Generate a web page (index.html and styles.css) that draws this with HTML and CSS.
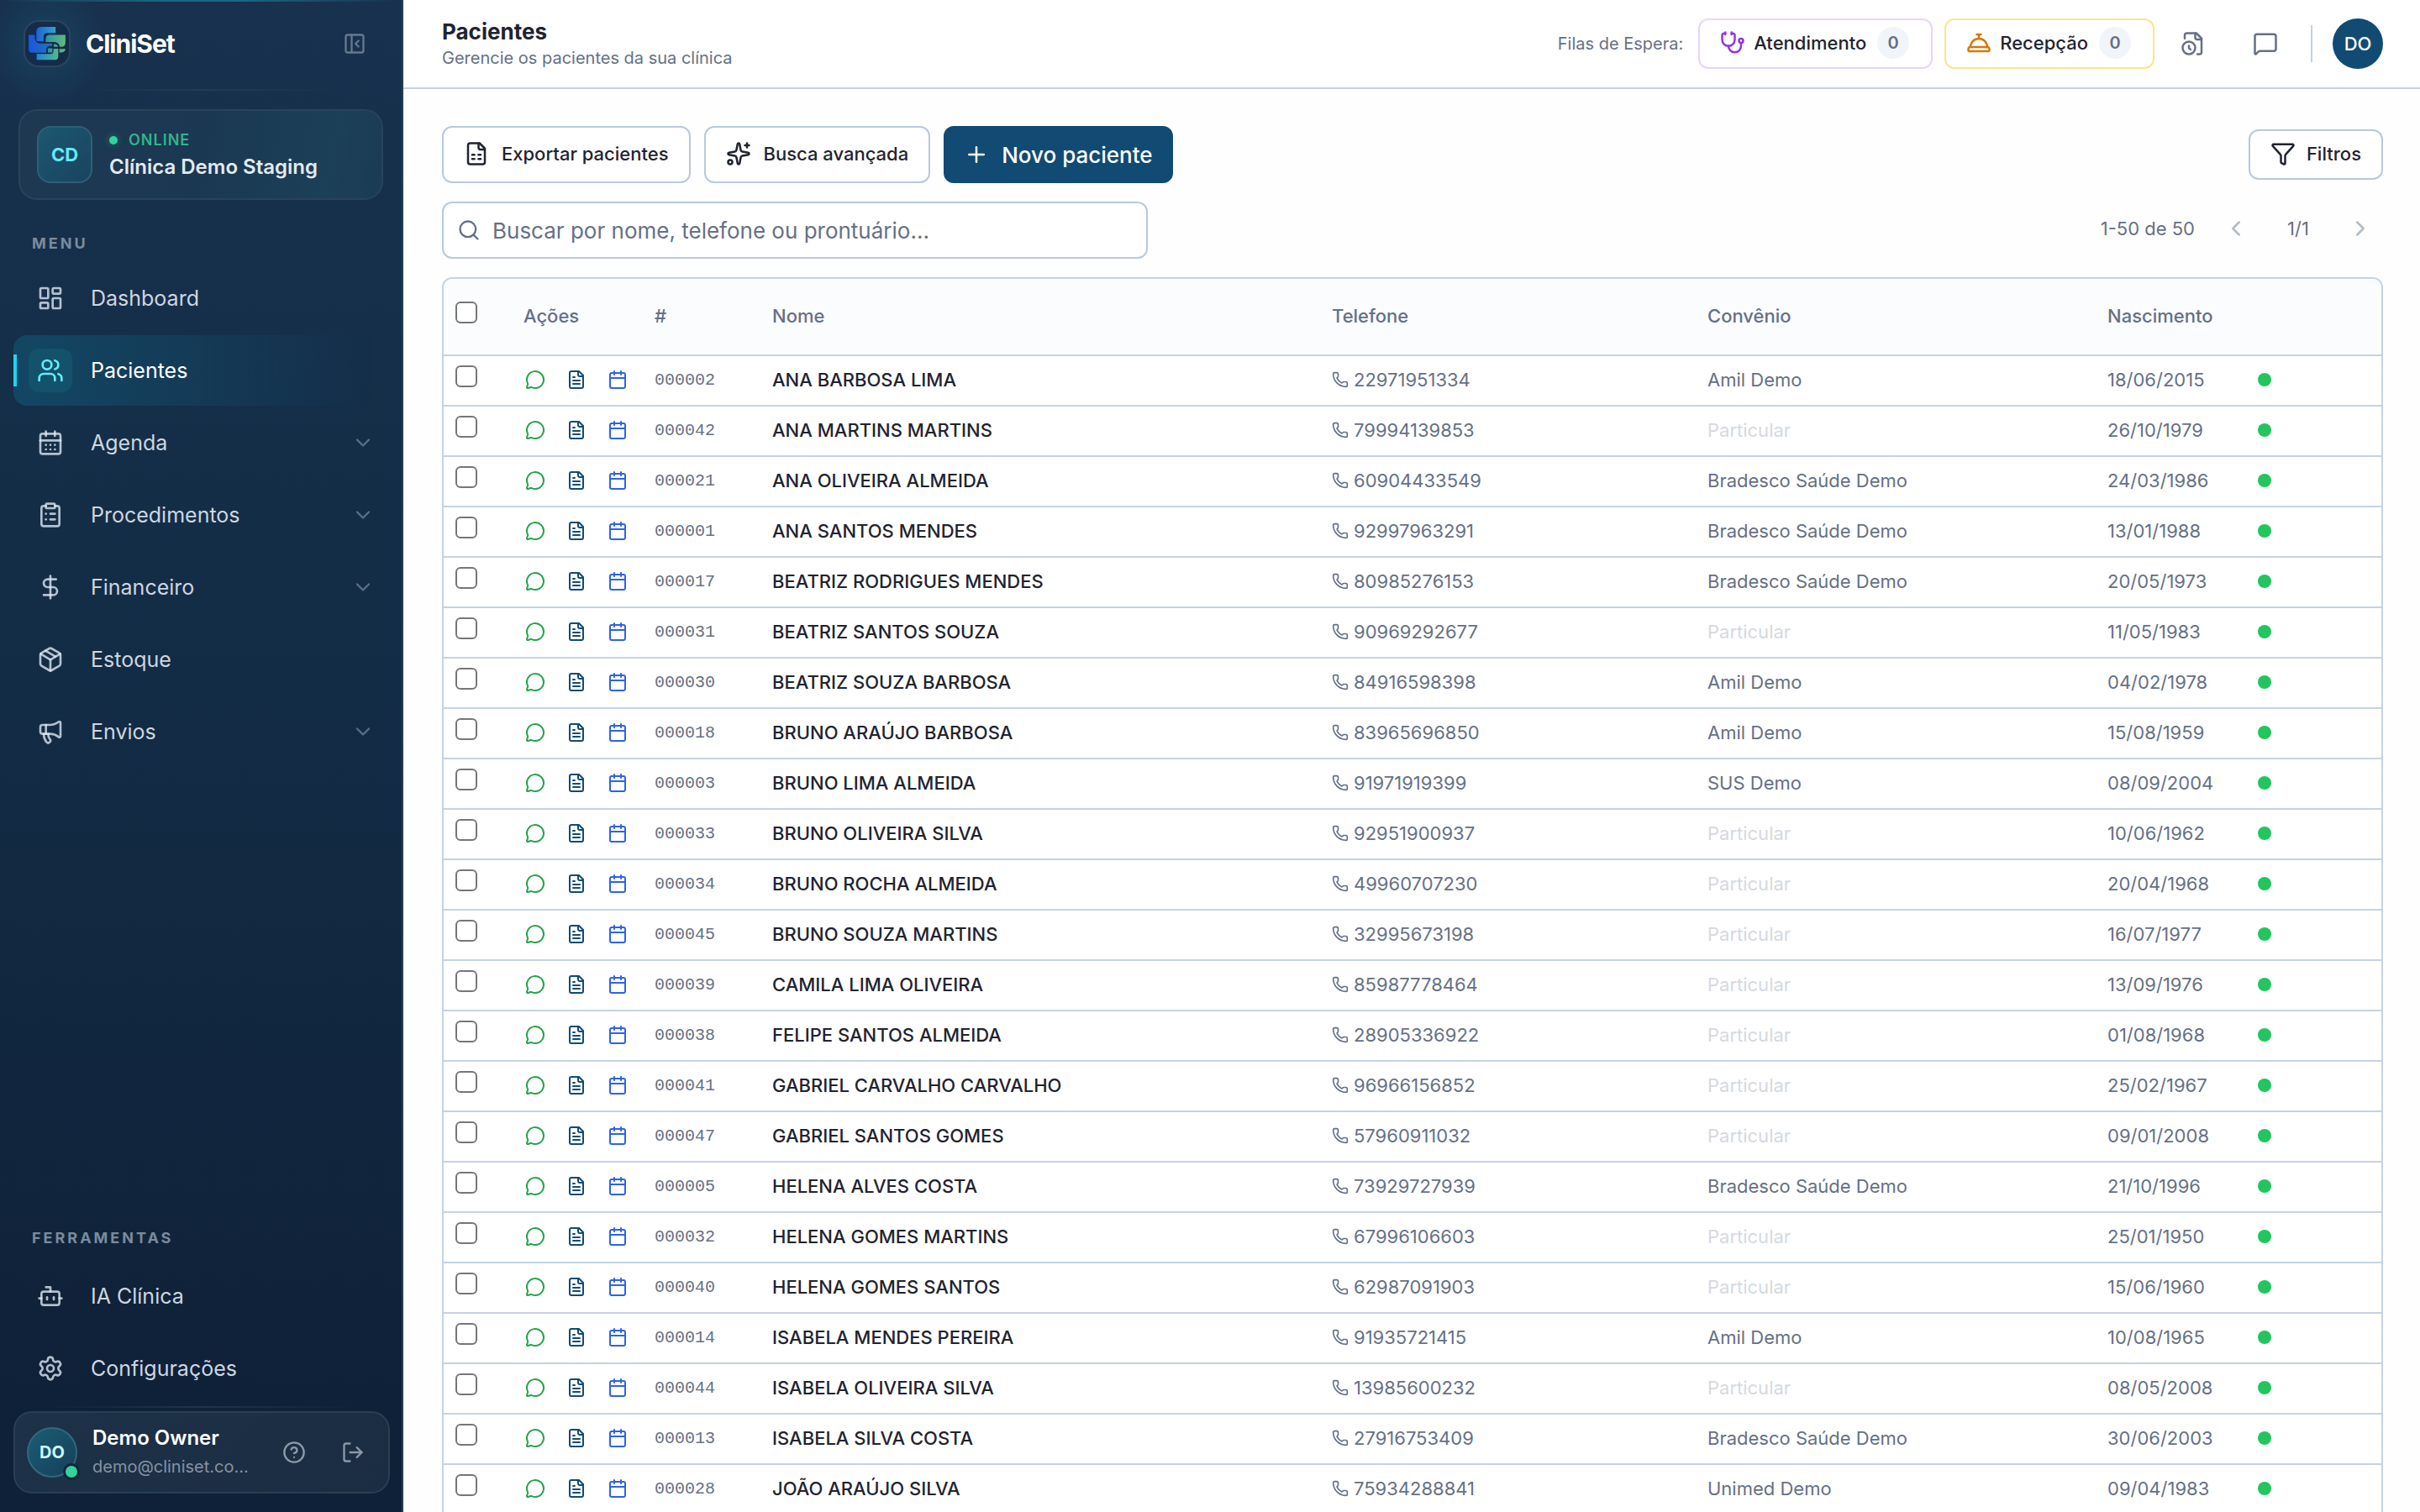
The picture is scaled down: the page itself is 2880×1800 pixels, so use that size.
FILE: index.html
```html
<!DOCTYPE html>
<html lang="pt-BR">
<head>
<meta charset="utf-8">
<title>Pacientes - CliniSet</title>
<link rel="stylesheet" href="styles.css">
</head>
<body>
<svg class="sprite" aria-hidden="true">
  <symbol id="i-dashboard" viewBox="0 0 24 24"><rect x="3" y="3" width="7" height="9" rx="1"/><rect x="14" y="3" width="7" height="5" rx="1"/><rect x="14" y="12" width="7" height="9" rx="1"/><rect x="3" y="16" width="7" height="5" rx="1"/></symbol>
  <symbol id="i-users" viewBox="0 0 24 24"><path d="M16 21v-2a4 4 0 0 0-4-4H6a4 4 0 0 0-4 4v2"/><circle cx="9" cy="7" r="4"/><path d="M22 21v-2a4 4 0 0 0-3-3.87"/><path d="M16 3.13a4 4 0 0 1 0 7.75"/></symbol>
  <symbol id="i-calendar-days" viewBox="0 0 24 24"><path d="M8 2v4"/><path d="M16 2v4"/><rect x="3" y="4" width="18" height="18" rx="2"/><path d="M3 10h18"/><path d="M8 14h.01"/><path d="M12 14h.01"/><path d="M16 14h.01"/><path d="M8 18h.01"/><path d="M12 18h.01"/><path d="M16 18h.01"/></symbol>
  <symbol id="i-clipboard" viewBox="0 0 24 24"><rect x="8" y="2" width="8" height="4" rx="1"/><path d="M16 4h2a2 2 0 0 1 2 2v14a2 2 0 0 1-2 2H6a2 2 0 0 1-2-2V6a2 2 0 0 1 2-2h2"/><path d="M12 11h4"/><path d="M12 16h4"/><path d="M8 11h.01"/><path d="M8 16h.01"/></symbol>
  <symbol id="i-dollar" viewBox="0 0 24 24"><path d="M12 2v20"/><path d="M17 5H9.5a3.5 3.5 0 0 0 0 7h5a3.5 3.5 0 0 1 0 7H6"/></symbol>
  <symbol id="i-package" viewBox="0 0 24 24"><path d="M11 21.73a2 2 0 0 0 2 0l7-4A2 2 0 0 0 21 16V8a2 2 0 0 0-1-1.73l-7-4a2 2 0 0 0-2 0l-7 4A2 2 0 0 0 3 8v8a2 2 0 0 0 1 1.73z"/><path d="M12 22V12"/><path d="m3.3 7 7.703 4.734a2 2 0 0 0 1.994 0L20.7 7"/><path d="m7.5 4.27 9 5.15"/></symbol>
  <symbol id="i-megaphone" viewBox="0 0 24 24"><path d="M11 6a13 13 0 0 0 8.4-2.8A1 1 0 0 1 21 4v12a1 1 0 0 1-1.6.8A13 13 0 0 0 11 14H5a2 2 0 0 1-2-2V8a2 2 0 0 1 2-2z"/><path d="M6 14a12 12 0 0 0 2.4 7.2 2 2 0 0 0 3.2-2.4A8 8 0 0 1 10 14"/><path d="M8 6v8"/></symbol>
  <symbol id="i-bot" viewBox="0 0 24 24"><path d="M12 8V4H8"/><rect x="4" y="8" width="16" height="12" rx="2"/><path d="M2 14h2"/><path d="M20 14h2"/><path d="M15 13v2"/><path d="M9 13v2"/></symbol>
  <symbol id="i-settings" viewBox="0 0 24 24"><path d="M9.671 4.136a2.34 2.34 0 0 1 4.659 0 2.34 2.34 0 0 0 3.319 1.915 2.34 2.34 0 0 1 2.33 4.033 2.34 2.34 0 0 0 0 3.831 2.34 2.34 0 0 1-2.33 4.033 2.34 2.34 0 0 0-3.319 1.915 2.34 2.34 0 0 1-4.659 0 2.34 2.34 0 0 0-3.32-1.915 2.34 2.34 0 0 1-2.33-4.033 2.34 2.34 0 0 0 0-3.831A2.34 2.34 0 0 1 6.35 6.051a2.34 2.34 0 0 0 3.319-1.915"/><circle cx="12" cy="12" r="3"/></symbol>
  <symbol id="i-help" viewBox="0 0 24 24"><circle cx="12" cy="12" r="10"/><path d="M9.09 9a3 3 0 0 1 5.83 1c0 2-3 3-3 3"/><path d="M12 17h.01"/></symbol>
  <symbol id="i-logout" viewBox="0 0 24 24"><path d="M9 21H5a2 2 0 0 1-2-2V5a2 2 0 0 1 2-2h4"/><path d="m16 17 5-5-5-5"/><path d="M21 12H9"/></symbol>
  <symbol id="i-panel" viewBox="0 0 24 24"><rect x="3" y="3" width="18" height="18" rx="2"/><path d="M9 3v18"/><path d="m16 15-3-3 3-3"/></symbol>
  <symbol id="i-down" viewBox="0 0 24 24"><path d="m6 9 6 6 6-6"/></symbol>
  <symbol id="i-left" viewBox="0 0 24 24"><path d="m15 18-6-6 6-6"/></symbol>
  <symbol id="i-right" viewBox="0 0 24 24"><path d="m9 18 6-6-6-6"/></symbol>
  <symbol id="i-stethoscope" viewBox="0 0 24 24"><path d="M11 2v2"/><path d="M5 2v2"/><path d="M5 3H4a2 2 0 0 0-2 2v4a6 6 0 0 0 12 0V5a2 2 0 0 0-2-2h-1"/><path d="M8 15a6 6 0 0 0 12 0v-3"/><circle cx="20" cy="10" r="2"/></symbol>
  <symbol id="i-bell" viewBox="0 0 24 24"><path d="M3 20a1 1 0 0 1-1-1v-1a2 2 0 0 1 2-2h16a2 2 0 0 1 2 2v1a1 1 0 0 1-1 1Z"/><path d="M20 16a8 8 0 1 0-16 0"/><path d="M12 4v4"/><path d="M10 4h4"/></symbol>
  <symbol id="i-file-clock" viewBox="0 0 24 24"><path d="M16 22h2a2 2 0 0 0 2-2V7l-5-5H6a2 2 0 0 0-2 2v3"/><path d="M14 2v4a2 2 0 0 0 2 2h4"/><circle cx="8" cy="16" r="6"/><path d="M9.5 17.5 8 16.25V14"/></symbol>
  <symbol id="i-message" viewBox="0 0 24 24"><path d="M22 17a2 2 0 0 1-2 2H6.828a2 2 0 0 0-1.414.586l-2.202 2.202A.71.71 0 0 1 2 21.286V5a2 2 0 0 1 2-2h16a2 2 0 0 1 2 2z"/></symbol>
  <symbol id="i-sheet" viewBox="0 0 24 24"><path d="M15 2H6a2 2 0 0 0-2 2v16a2 2 0 0 0 2 2h12a2 2 0 0 0 2-2V7Z"/><path d="M14 2v4a2 2 0 0 0 2 2h4"/><path d="M8 13h2"/><path d="M14 13h2"/><path d="M8 17h2"/><path d="M14 17h2"/></symbol>
  <symbol id="i-sparkles" viewBox="0 0 24 24"><path d="M11.017 2.814a1 1 0 0 1 1.966 0l1.051 5.558a2 2 0 0 0 1.594 1.594l5.558 1.051a1 1 0 0 1 0 1.966l-5.558 1.051a2 2 0 0 0-1.594 1.594l-1.051 5.558a1 1 0 0 1-1.966 0l-1.051-5.558a2 2 0 0 0-1.594-1.594l-5.558-1.051a1 1 0 0 1 0-1.966l5.558-1.051a2 2 0 0 0 1.594-1.594z"/><path d="M20 2v4"/><path d="M22 4h-4"/><circle cx="4" cy="20" r="2"/></symbol>
  <symbol id="i-plus" viewBox="0 0 24 24"><path d="M5 12h14"/><path d="M12 5v14"/></symbol>
  <symbol id="i-search" viewBox="0 0 24 24"><circle cx="11" cy="11" r="8"/><path d="m21 21-4.34-4.34"/></symbol>
  <symbol id="i-funnel" viewBox="0 0 24 24"><path d="M10 20a1 1 0 0 0 .553.895l2 1A1 1 0 0 0 14 21v-7a2 2 0 0 1 .517-1.341L21.74 4.67A1 1 0 0 0 21 3H3a1 1 0 0 0-.742 1.67l7.225 7.989A2 2 0 0 1 10 14z"/></symbol>
  <symbol id="i-chat" viewBox="0 0 24 24"><path d="M2.992 16.342a2 2 0 0 1 .094 1.167l-1.065 3.29a1 1 0 0 0 1.236 1.168l3.413-.998a2 2 0 0 1 1.099.092 10 10 0 1 0-4.777-4.719"/></symbol>
  <symbol id="i-file" viewBox="0 0 24 24"><path d="M15 2H6a2 2 0 0 0-2 2v16a2 2 0 0 0 2 2h12a2 2 0 0 0 2-2V7Z"/><path d="M14 2v4a2 2 0 0 0 2 2h4"/><path d="M10 9H8"/><path d="M16 13H8"/><path d="M16 17H8"/></symbol>
  <symbol id="i-calendar" viewBox="0 0 24 24"><path d="M8 2v4"/><path d="M16 2v4"/><rect x="3" y="4" width="18" height="18" rx="2"/><path d="M3 10h18"/></symbol>
  <symbol id="i-phone" viewBox="0 0 24 24"><path d="M13.832 16.568a1 1 0 0 0 1.213-.303l.355-.465A2 2 0 0 1 17 15h3a2 2 0 0 1 2 2v3a2 2 0 0 1-2 2A18 18 0 0 1 2 4a2 2 0 0 1 2-2h3a2 2 0 0 1 2 2v3a2 2 0 0 1-.8 1.6l-.468.351a1 1 0 0 0-.292 1.233 14 14 0 0 0 6.392 6.384"/></symbol>
</svg>

<div class="app">
  <aside class="sidebar">
    <div class="brand">
      <svg class="logo" viewBox="86 74 164 164" aria-hidden="true">
        <defs>
          <linearGradient id="g-top" x1="0" x2="1"><stop offset="0" stop-color="#1b63dd"/><stop offset="1" stop-color="#2fa6c4"/></linearGradient>
          <linearGradient id="g-left" x1="0" x2="1"><stop offset="0" stop-color="#1b55dc"/><stop offset="1" stop-color="#2672b8"/></linearGradient>
          <linearGradient id="g-right" x1="0" x2="1"><stop offset="0" stop-color="#2f93a6"/><stop offset="1" stop-color="#5fba7a"/></linearGradient>
          <linearGradient id="g-bottom" x1="0" x2="1"><stop offset="0" stop-color="#1f86d6"/><stop offset="1" stop-color="#55b78c"/></linearGradient>
        </defs>
        <path fill="url(#g-top)" d="M128 145V112Q128 93 147 93H200V116H168Q155 117 155 130V147H138Q129 147 128 145Z"/>
        <path fill="url(#g-left)" d="M99 123H122V138Q124 153 140 155H187V165H178Q166 167 165 178V190H112Q99 190 99 177Z"/>
        <path fill="url(#g-right)" d="M237 123V152Q237 167 222 168H216Q213 152 196 150H163V138Q163 123 178 123Z"/>
        <path fill="url(#g-right)" d="M193 157Q207 158 209 168H193ZM171 173H188V189H171ZM214 176H237Q236 189 222 189H214Z"/>
        <path fill="url(#g-bottom)" d="M129 195H180Q190 195 192 186V175H210V203Q210 217 196 217H129Z"/>
      </svg>
      <span class="brand-name">CliniSet</span>
      <button class="collapse" type="button" aria-label="Recolher menu"><svg class="icon s28"><use href="#i-panel"/></svg></button>
    </div>

    <div class="clinic">
      <span class="clinic-badge">CD</span>
      <div class="clinic-text">
        <span class="clinic-status">ONLINE</span>
        <span class="clinic-name">Clínica Demo Staging</span>
      </div>
    </div>

    <h2 class="nav-title">MENU</h2>
    <nav class="nav">
      <a class="nav-item" href="#"><span class="nav-icon"><svg class="icon s32"><use href="#i-dashboard"/></svg></span><span>Dashboard</span></a>
      <a class="nav-item active" href="#" aria-current="page"><span class="nav-icon"><svg class="icon s32"><use href="#i-users"/></svg></span><span>Pacientes</span></a>
      <a class="nav-item" href="#"><span class="nav-icon"><svg class="icon s32"><use href="#i-calendar-days"/></svg></span><span>Agenda</span><svg class="icon s28 chev"><use href="#i-down"/></svg></a>
      <a class="nav-item" href="#"><span class="nav-icon"><svg class="icon s32"><use href="#i-clipboard"/></svg></span><span>Procedimentos</span><svg class="icon s28 chev"><use href="#i-down"/></svg></a>
      <a class="nav-item" href="#"><span class="nav-icon"><svg class="icon s32"><use href="#i-dollar"/></svg></span><span>Financeiro</span><svg class="icon s28 chev"><use href="#i-down"/></svg></a>
      <a class="nav-item" href="#"><span class="nav-icon"><svg class="icon s32"><use href="#i-package"/></svg></span><span>Estoque</span></a>
      <a class="nav-item" href="#"><span class="nav-icon"><svg class="icon s32"><use href="#i-megaphone"/></svg></span><span>Envios</span><svg class="icon s28 chev"><use href="#i-down"/></svg></a>
    </nav>

    <h2 class="nav-title tools">FERRAMENTAS</h2>
    <nav class="nav">
      <a class="nav-item" href="#"><span class="nav-icon"><svg class="icon s32"><use href="#i-bot"/></svg></span><span>IA Clínica</span></a>
      <a class="nav-item" href="#"><span class="nav-icon"><svg class="icon s32"><use href="#i-settings"/></svg></span><span>Configurações</span></a>
    </nav>

    <div class="user">
      <span class="user-avatar">DO</span>
      <div class="user-text">
        <span class="user-name">Demo Owner</span>
        <span class="user-mail">demo@cliniset.co...</span>
      </div>
      <div class="user-actions">
        <button type="button" aria-label="Ajuda"><svg class="icon s28"><use href="#i-help"/></svg></button>
        <button type="button" aria-label="Sair"><svg class="icon s28"><use href="#i-logout"/></svg></button>
      </div>
    </div>
  </aside>

  <div class="page">
    <header class="topbar">
      <div class="heading">
        <h1>Pacientes</h1>
        <p>Gerencie os pacientes da sua clínica</p>
      </div>
      <div class="topbar-right">
        <span class="queue-label">Filas de Espera:</span>
        <button class="queue care" type="button"><svg class="icon s30"><use href="#i-stethoscope"/></svg>Atendimento<span class="count">0</span></button>
        <button class="queue desk" type="button"><svg class="icon s30"><use href="#i-bell"/></svg>Recepção<span class="count">0</span></button>
        <button class="tool" type="button" aria-label="Histórico"><svg class="icon s30"><use href="#i-file-clock"/></svg></button>
        <button class="tool" type="button" aria-label="Mensagens"><svg class="icon s30"><use href="#i-message"/></svg></button>
        <span class="divider"></span>
        <button class="avatar" type="button">DO</button>
      </div>
    </header>

    <main class="content">
      <div class="toolbar">
        <button class="btn" type="button"><svg class="icon s30"><use href="#i-sheet"/></svg>Exportar pacientes</button>
        <button class="btn" type="button"><svg class="icon s30"><use href="#i-sparkles"/></svg>Busca avançada</button>
        <button class="btn primary" type="button"><svg class="icon s30"><use href="#i-plus"/></svg>Novo paciente</button>
        <button class="btn filter" type="button"><svg class="icon s30"><use href="#i-funnel"/></svg>Filtros</button>
      </div>
      <div class="searchbar">
        <label class="search"><svg class="icon s28"><use href="#i-search"/></svg><input type="text" placeholder="Buscar por nome, telefone ou prontuário..." aria-label="Buscar pacientes"></label>
        <div class="pager">
          <span>1-50 de 50</span>
          <button type="button" disabled aria-label="Página anterior"><svg class="icon s30"><use href="#i-left"/></svg></button>
          <span class="page-no">1/1</span>
          <button type="button" disabled aria-label="Próxima página"><svg class="icon s30"><use href="#i-right"/></svg></button>
        </div>
      </div>
      <div class="table-card">
        <table class="patients">
          <colgroup><col class="c-check"><col class="c-actions"><col class="c-code"><col class="c-name"><col class="c-phone"><col class="c-plan"><col class="c-birth"><col class="c-status"></colgroup>
          <thead>
            <tr><th class="pick"><input type="checkbox" aria-label="Selecionar todos"></th><th>Ações</th><th>#</th><th>Nome</th><th>Telefone</th><th>Convênio</th><th>Nascimento</th><th aria-label="Status"></th></tr>
          </thead>
          <tbody id="rows"></tbody>
        </table>
      </div>
    </main>
  </div>
</div>
<script src="script.js"></script>
</body>
</html>
```
FILE: styles.css
```css
:root {
  --text: #1f2430;
  --muted: #667085;
  --line: #c5d2e3;
  --primary: #114b74;
}

*, *::before, *::after { box-sizing: border-box; }

body {
  margin: 0;
  font-family: Inter, "Liberation Sans", sans-serif;
  font-size: 22px;
  color: var(--text);
  background: #fefefe;
}

h1, h2, p { margin: 0; }
a { color: inherit; text-decoration: none; }
button { font: inherit; color: inherit; background: none; border: 0; padding: 0; display: inline-flex; align-items: center; justify-content: center; }

.sprite { display: none; }
.icon { flex: none; fill: none; stroke: currentColor; stroke-width: 2; stroke-linecap: round; stroke-linejoin: round; }
.s20 { width: 20px; height: 20px; }
.s24 { width: 24px; height: 24px; }
.s28 { width: 28px; height: 28px; }
.s30 { width: 30px; height: 30px; }
.s32 { width: 32px; height: 32px; }

.app { display: flex; height: 100vh; overflow: hidden; }

/* Sidebar */
.sidebar {
  flex: none;
  width: 480px;
  display: flex;
  flex-direction: column;
  padding: 0 14px 22px 16px;
  border-right: 2px solid #253e56;
  color: #cdd6e0;
  background:
    linear-gradient(90deg, transparent, #1a6784 40%, #1a6784 60%, transparent) top / 100% 2px no-repeat,
    radial-gradient(circle at 56px 52px, rgba(34, 150, 180, .18), transparent 70px),
    linear-gradient(180deg, #17314e 0%, #132c45 45%, #0f2138 92%, #0f2138 100%);
}

.brand {
  display: flex;
  align-items: center;
  height: 108px;
  padding: 0 26px 4px 12px;
  background: linear-gradient(90deg, transparent 18%, #223b55 50%, transparent 88%) bottom / 100% 2px no-repeat;
}
.logo { width: 56px; height: 56px; border: 2px solid #28465f; border-radius: 18px; background: #142c49; }
.brand-name { margin-left: 18px; font-size: 30px; font-weight: 700; color: #fff; letter-spacing: -1px; }
.collapse { margin-left: auto; color: #66798c; padding: 2px; }
.collapse .icon { stroke-width: 2; }

.clinic {
  display: flex;
  align-items: center;
  gap: 20px;
  margin: 22px 8px 0 6px;
  padding: 18px 20px;
  border: 2px solid #29435a;
  border-radius: 22px;
  background: linear-gradient(100deg, #1e3852 0%, #1b3852 50%, #1b4058 85%, #1c3b54 100%);
}
.clinic-badge {
  display: flex;
  align-items: center;
  justify-content: center;
  width: 66px;
  height: 68px;
  border: 2px solid #2f5f76;
  border-radius: 16px;
  background: linear-gradient(135deg, #1b5870, #1a4360);
  color: #67e8f9;
  font-weight: 700;
}
.clinic-text { display: flex; flex-direction: column; padding-top: 4px; }
.clinic-status { display: flex; align-items: center; gap: 13px; font-size: 18px; line-height: 26px; font-weight: 600; letter-spacing: 1px; color: #32b48c; }
.clinic-status::before { content: ""; width: 10px; height: 10px; border-radius: 50%; background: #34d399; box-shadow: 0 0 10px rgba(52, 211, 153, .4); }
.clinic-name { font-size: 24px; line-height: 38px; font-weight: 600; color: #e4eaf0; }

.nav-title { margin: 40px 0 11px; padding-left: 22px; font-size: 18px; line-height: 24px; font-weight: 700; letter-spacing: 3px; color: #7b8b9d; }
.nav-title.tools { margin: auto 0 15px; }
.nav { display: flex; flex-direction: column; gap: 2px; }
.nav-item { display: flex; align-items: center; gap: 22px; height: 84px; padding: 0 18px; border-radius: 16px; font-size: 25px; }
.nav-icon { display: flex; align-items: center; justify-content: center; width: 52px; height: 52px; border-radius: 12px; color: rgba(226, 234, 246, .78); }
.chev { margin-left: auto; color: #5a6f83; }
.nav-item.active {
  color: #fff;
  background:
    linear-gradient(#22d3ee, #22d3ee) left center / 4px 38px no-repeat,
    linear-gradient(90deg, #124763 0%, #143a56 50%, transparent 95%);
}
.active .nav-icon { color: #67e8f9; background: #12526b; }

.user {
  display: flex;
  align-items: center;
  gap: 18px;
  position: relative;
  height: 98px;
  margin-top: 9px;
  padding: 0 12px 0 14px;
  border: 2px solid #293f53;
  border-radius: 22px;
  background: linear-gradient(135deg, #1d3148, #1a2d42);
}
.user::before { content: ""; position: absolute; left: 40px; right: 40px; top: -8px; height: 2px; background: linear-gradient(90deg, transparent, #1f344a, transparent); }
.user-avatar {
  position: relative;
  display: flex;
  align-items: center;
  justify-content: center;
  flex: none;
  width: 60px;
  height: 60px;
  border: 2px solid #32687c;
  border-radius: 50%;
  background: linear-gradient(135deg, #185e74, #173f5b);
  color: #cffafe;
  font-size: 20px;
  font-weight: 700;
}
.user-avatar::after { content: ""; position: absolute; right: -5px; bottom: -5px; width: 20px; height: 20px; border: 3px solid #12263c; border-radius: 50%; background: #34d399; }
.user-text { flex: 1; min-width: 0; display: flex; flex-direction: column; padding-bottom: 2px; }
.user-name { font-size: 24px; line-height: 36px; font-weight: 600; color: #fff; }
.user-mail { font-size: 20px; line-height: 32px; color: #8593a2; white-space: nowrap; }
.user-actions { display: flex; gap: 10px; color: #8b99a8; }
.user-actions button { width: 60px; height: 60px; }

/* Top bar */
.page { flex: 1; min-width: 0; display: flex; flex-direction: column; }
.topbar { display: flex; align-items: center; justify-content: space-between; height: 106px; padding: 0 44px 0 46px; border-bottom: 2px solid var(--line); background: #fff; flex: none; }
.heading h1 { font-size: 26px; line-height: 34px; font-weight: 700; }
.heading p { font-size: 20px; line-height: 28px; color: var(--muted); }
.topbar-right { display: flex; align-items: center; }
.queue-label { margin-right: 18px; font-size: 20px; color: var(--muted); }
.queue { height: 60px; padding: 0 26px 2px 24px; gap: 10px; margin-right: 14px; border: 2px solid; border-radius: 12px; font-weight: 500; }
.care { border-color: #e6d5fd; }
.care .icon { color: #9333ea; }
.desk { border-color: #fde58a; }
.desk .icon { color: #d97706; }
.count { display: flex; align-items: center; justify-content: center; width: 38px; height: 38px; margin-left: 3px; border-radius: 50%; background: #f1f5f9; color: var(--muted); font-size: 20px; font-weight: 600; }
.tool { width: 60px; height: 60px; margin-left: 2px; margin-right: 24px; color: var(--muted); }
.divider { width: 2px; height: 44px; background: var(--line); }
.avatar { width: 60px; height: 60px; margin-left: 24px; border-radius: 50%; background: var(--primary); color: #fff; font-weight: 500; }

/* Content */
.content { flex: 1; min-height: 0; overflow: hidden; padding: 44px 44px 0 46px; }
.toolbar { display: flex; align-items: center; gap: 16px; }
.btn { height: 68px; padding: 0 24px 3px; gap: 15px; border: 2px solid #b9c8dc; border-radius: 12px; background: #fff; font-weight: 500; }
.btn.primary { padding: 0 22px; border-color: var(--primary); background: var(--primary); color: #fff; font-size: 26px; }
.btn.filter { margin-left: auto; height: 60px; gap: 13px; }

.searchbar { display: flex; align-items: center; justify-content: space-between; margin: 22px 0; }
.search { display: flex; align-items: center; gap: 14px; width: 840px; height: 68px; padding: 0 16px; border: 2px solid #b9c8dc; border-radius: 12px; background: #fff; color: var(--muted); }
.search input { flex: 1; border: 0; padding: 0; outline: 0; background: none; font: inherit; font-size: 26px; color: var(--text); }
.search input::placeholder { color: var(--muted); opacity: 1; }
.pager { display: flex; align-items: center; padding-bottom: 4px; color: var(--muted); }
.pager button { width: 54px; height: 54px; color: #b4bac4; }
.pager button:first-of-type { margin-left: 22px; }
.page-no { width: 94px; text-align: center; }

/* Patient table */
.table-card { border: 2px solid var(--line); border-radius: 12px 12px 0 0; overflow: hidden; background: #fff; }
.patients { width: 100%; table-layout: fixed; border-collapse: separate; border-spacing: 0; }
.c-check { width: 80px; }
.c-actions { width: 156px; }
.c-code { width: 140px; }
.c-phone { width: 447px; }
.c-plan { width: 476px; }
.c-birth { width: 179px; }
.c-status { width: 162px; }
.patients th, .patients td { padding: 0 15px 2px; text-align: left; border-bottom: 2px solid var(--line); color: var(--muted); white-space: nowrap; }
.patients th { height: 92px; background: #fafcfe; font-weight: 500; }
.patients td { height: 60px; }
.patients .pick { padding: 0 14px 10px; }
.pick input { appearance: none; display: block; width: 26px; height: 26px; margin: 0; border: 2px solid #767676; border-radius: 6px; background: #fff; }
.patients .name { color: var(--text); font-weight: 500; }
.patients .code { font-family: "Liberation Mono", monospace; font-size: 20px; }
.patients .none { color: #d5d9df; }
.actions { display: flex; gap: 25px; padding-left: 2px; }
.chat { color: #22a34a; }
.record { color: #114b74; }
.date { color: #2f62e8; }
.phone { display: flex; align-items: center; gap: 6px; }
.dot { display: block; width: 16px; height: 16px; border-radius: 50%; background: #22c55e; }
```
FILE: script.js
```js
const patients = [
  ["000002", "ANA BARBOSA LIMA", "22971951334", "Amil Demo", "18/06/2015"],
  ["000042", "ANA MARTINS MARTINS", "79994139853", "", "26/10/1979"],
  ["000021", "ANA OLIVEIRA ALMEIDA", "60904433549", "Bradesco Saúde Demo", "24/03/1986"],
  ["000001", "ANA SANTOS MENDES", "92997963291", "Bradesco Saúde Demo", "13/01/1988"],
  ["000017", "BEATRIZ RODRIGUES MENDES", "80985276153", "Bradesco Saúde Demo", "20/05/1973"],
  ["000031", "BEATRIZ SANTOS SOUZA", "90969292677", "", "11/05/1983"],
  ["000030", "BEATRIZ SOUZA BARBOSA", "84916598398", "Amil Demo", "04/02/1978"],
  ["000018", "BRUNO ARAÚJO BARBOSA", "83965696850", "Amil Demo", "15/08/1959"],
  ["000003", "BRUNO LIMA ALMEIDA", "91971919399", "SUS Demo", "08/09/2004"],
  ["000033", "BRUNO OLIVEIRA SILVA", "92951900937", "", "10/06/1962"],
  ["000034", "BRUNO ROCHA ALMEIDA", "49960707230", "", "20/04/1968"],
  ["000045", "BRUNO SOUZA MARTINS", "32995673198", "", "16/07/1977"],
  ["000039", "CAMILA LIMA OLIVEIRA", "85987778464", "", "13/09/1976"],
  ["000038", "FELIPE SANTOS ALMEIDA", "28905336922", "", "01/08/1968"],
  ["000041", "GABRIEL CARVALHO CARVALHO", "96966156852", "", "25/02/1967"],
  ["000047", "GABRIEL SANTOS GOMES", "57960911032", "", "09/01/2008"],
  ["000005", "HELENA ALVES COSTA", "73929727939", "Bradesco Saúde Demo", "21/10/1996"],
  ["000032", "HELENA GOMES MARTINS", "67996106603", "", "25/01/1950"],
  ["000040", "HELENA GOMES SANTOS", "62987091903", "", "15/06/1960"],
  ["000014", "ISABELA MENDES PEREIRA", "91935721415", "Amil Demo", "10/08/1965"],
  ["000044", "ISABELA OLIVEIRA SILVA", "13985600232", "", "08/05/2008"],
  ["000013", "ISABELA SILVA COSTA", "27916753409", "Bradesco Saúde Demo", "30/06/2003"],
  ["000028", "JOÃO ARAÚJO SILVA", "75934288841", "Unimed Demo", "09/04/1983"]
];

const icon = (id, size) => `<svg class="icon ${size}"><use href="#i-${id}"/></svg>`;
const action = (cls, label, id) => `<button class="${cls}" type="button" aria-label="${label}">${icon(id, "s24")}</button>`;

document.getElementById("rows").innerHTML = patients.map(([code, name, phone, plan, birth]) => `
  <tr>
    <td class="pick"><input type="checkbox" aria-label="Selecionar ${name}"></td>
    <td><div class="actions">${action("chat", "WhatsApp", "chat")}${action("record", "Prontuário", "file")}${action("date", "Agendar", "calendar")}</div></td>
    <td class="code">${code}</td>
    <td class="name">${name}</td>
    <td><span class="phone">${icon("phone", "s20")}${phone}</span></td>
    <td${plan ? "" : ' class="none"'}>${plan || "Particular"}</td>
    <td>${birth}</td>
    <td><span class="dot"></span></td>
  </tr>`).join("");
```
